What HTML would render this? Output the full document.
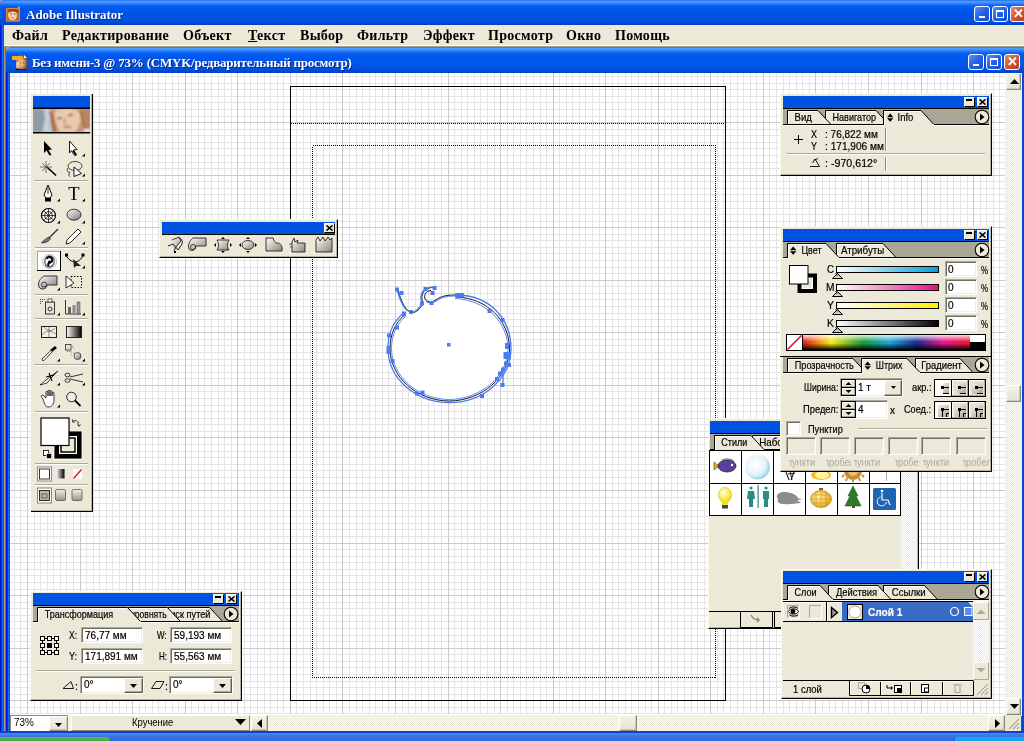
<!DOCTYPE html>
<html><head><meta charset="utf-8">
<style>
*{margin:0;padding:0;box-sizing:border-box}
html,body{width:1024px;height:741px;overflow:hidden;background:#0054E3;font-family:"Liberation Sans",sans-serif;font-size:11px;color:#000}
.a{position:absolute}
#apptitle{left:0;top:0;width:1024px;height:25px;background:linear-gradient(#1A5CE6 0px,#4A9CFF 1px,#3D8EFF 3px,#1068F5 5px,#0058EE 8px,#0054E6 16px,#0052E2 20px,#0046D0 24px,#0040C4 25px)}
#appborder{left:0;top:0;width:1024px;height:741px;background:#0046D5}
body{background:#7A96C8}
#menubar{left:4px;top:25px;width:1020px;height:21px;background:#ECE9D8}
.menu{font-family:"Liberation Serif",serif;font-weight:bold;font-size:14px;top:28px;letter-spacing:0.3px;line-height:16px;color:#000}
#mdi{left:4px;top:46px;width:1020px;height:686px;background:linear-gradient(to right,#A89C78 0 1px,#7A7460 1px 2px,#A39D86 2px)}
#docwin{left:6px;top:47px;width:1025px;height:685px;background:#0054E3;border-radius:7px 7px 0 0}
#doctitle{left:6px;top:47px;width:1025px;height:26px;border-radius:7px 7px 0 0;background:linear-gradient(#2A70F0 0px,#4A9CFF 1.5px,#3A8CFF 3px,#1068F5 5.5px,#0058EE 8px,#0055E8 17px,#0052E2 21px,#0046D0 25px,#0040C4 26px)}
.ttl{font-family:"Liberation Serif",serif;font-weight:bold;color:#fff;text-shadow:1px 1px 0 #0A1E8C}
#canvas{left:10px;top:73px;width:995px;height:642px;background:#fff;overflow:hidden}
.xpbtn{border:1px solid #fff;border-radius:3px;background:linear-gradient(135deg,#5B8FF6,#2460E6 50%,#1A4CD0)}
.xpclose{border:1px solid #fff;border-radius:3px;background:linear-gradient(135deg,#F08A6A,#D9532E 50%,#B63A18)}

.scr{background:#F3F2EA;background-image:repeating-conic-gradient(#ECE9D8 0 25%,#FBFAF5 0 50%);background-size:2px 2px}
.sbtn{position:absolute;background:linear-gradient(#F4F2E8,#E6E3D3);border-right:1px solid #8C8A7E;border-bottom:1px solid #8C8A7E;border-left:1px solid #fff;border-top:1px solid #fff;box-shadow:inset -1px -1px 0 #CFCBB8}
.pnl{position:absolute;background:#ECE9D8;border-left:1px solid #FBFAF3;border-top:1px solid #FBFAF3;box-shadow:1px 1px 0 #000, inset -1px -1px 0 #B9B6A6}
.ptl{position:absolute;left:2px;right:2px;top:2px;height:13px;background:#0052E0;border-bottom:1px solid #000}
.pbt{position:absolute;top:1px;width:11px;height:10px;background:#ECE9D8;border-left:1px solid #fff;border-top:1px solid #fff;border-right:1px solid #404040;border-bottom:1px solid #404040}
</style></head><body><div id="root" style="position:absolute;left:0;top:0;width:1024px;height:741px;will-change:transform">
<svg id="chkdefs" width="0" height="0" style="position:absolute"><defs><pattern id="chk" width="2" height="2" patternUnits="userSpaceOnUse"><rect width="2" height="2" fill="#ECE9D8"/><rect width="1" height="1" fill="#fff"/><rect x="1" y="1" width="1" height="1" fill="#fff"/></pattern></defs></svg>
<div class="a" id="appborder" style="border-radius:6px 0 0 0"></div>
<div class="a" id="apptitle" style="border-radius:6px 0 0 0"></div>
<div class="a ttl" style="left:26px;top:7px;font-size:13px;line-height:15px">Adobe Illustrator</div>
<div class="a" id="menubar"></div><div class="a" style="left:4px;top:45px;width:1020px;height:1px;background:#fff"></div>
<div class="a menu" style="left:12px">Файл</div>
<div class="a menu" style="left:62px">Редактирование</div>
<div class="a menu" style="left:183px">Объект</div>
<div class="a menu" style="left:248px"><u>Т</u>екст</div>
<div class="a menu" style="left:300px">Выбор</div>
<div class="a menu" style="left:357px">Фильтр</div>
<div class="a menu" style="left:423px">Эффект</div>
<div class="a menu" style="left:488px">Просмотр</div>
<div class="a menu" style="left:566px">Окно</div>
<div class="a menu" style="left:615px">Помощь</div>
<div class="a" id="mdi"></div>
<div class="a" id="docwin"></div>
<div class="a" id="doctitle"></div>
<div class="a ttl" style="left:32px;top:55px;font-size:13px;line-height:15px;letter-spacing:-0.22px">Без имени-3 @ 73% (CMYK/редварительный просмотр)</div>
<div class="a" style="left:0;top:25px;width:4px;height:706px;background:linear-gradient(to right,#0016D0 0 1px,#0A34D8 1px 2px,#1A6AF0 2px 3px,#0058E8 3px 4px)"></div>
<div class="a" style="left:6px;top:73px;width:4px;height:658px;background:linear-gradient(to right,#0016D8 0 1px,#0034E0 1px 2px,#1A6AF0 2px 3px,#0058E8 3px 4px)"></div>
<div class="a" id="canvas">
<svg width="995" height="641" style="position:absolute;left:0;top:0">

<rect width="995" height="641" fill="#fff"/><path d="M4.5 0V641M10.5 0V641M24.5 0V641M30.5 0V641M37.5 0V641M43.5 0V641M50.5 0V641M56.5 0V641M63.5 0V641M76.5 0V641M83.5 0V641M89.5 0V641M96.5 0V641M102.5 0V641M109.5 0V641M116.5 0V641M129.5 0V641M135.5 0V641M142.5 0V641M148.5 0V641M155.5 0V641M162.5 0V641M168.5 0V641M181.5 0V641M188.5 0V641M194.5 0V641M201.5 0V641M208.5 0V641M214.5 0V641M221.5 0V641M234.5 0V641M240.5 0V641M247.5 0V641M254.5 0V641M260.5 0V641M267.5 0V641M273.5 0V641M286.5 0V641M293.5 0V641M300.5 0V641M306.5 0V641M313.5 0V641M319.5 0V641M326.5 0V641M339.5 0V641M346.5 0V641M352.5 0V641M359.5 0V641M365.5 0V641M372.5 0V641M378.5 0V641M392.5 0V641M398.5 0V641M405.5 0V641M411.5 0V641M418.5 0V641M424.5 0V641M431.5 0V641M444.5 0V641M451.5 0V641M457.5 0V641M464.5 0V641M470.5 0V641M477.5 0V641M484.5 0V641M497.5 0V641M503.5 0V641M510.5 0V641M516.5 0V641M523.5 0V641M530.5 0V641M536.5 0V641M549.5 0V641M556.5 0V641M562.5 0V641M569.5 0V641M575.5 0V641M582.5 0V641M589.5 0V641M602.5 0V641M608.5 0V641M615.5 0V641M621.5 0V641M628.5 0V641M635.5 0V641M641.5 0V641M654.5 0V641M661.5 0V641M667.5 0V641M674.5 0V641M681.5 0V641M687.5 0V641M694.5 0V641M707.5 0V641M713.5 0V641M720.5 0V641M727.5 0V641M733.5 0V641M740.5 0V641M746.5 0V641M759.5 0V641M766.5 0V641M773.5 0V641M779.5 0V641M786.5 0V641M792.5 0V641M799.5 0V641M812.5 0V641M819.5 0V641M825.5 0V641M832.5 0V641M838.5 0V641M845.5 0V641M851.5 0V641M865.5 0V641M871.5 0V641M878.5 0V641M884.5 0V641M891.5 0V641M897.5 0V641M904.5 0V641M917.5 0V641M924.5 0V641M930.5 0V641M937.5 0V641M943.5 0V641M950.5 0V641M957.5 0V641M970.5 0V641M976.5 0V641M983.5 0V641M989.5 0V641M0 3.5H995M0 10.5H995M0 16.5H995M0 23.5H995M0 29.5H995M0 36.5H995M0 43.5H995M0 56.5H995M0 62.5H995M0 69.5H995M0 75.5H995M0 82.5H995M0 89.5H995M0 95.5H995M0 108.5H995M0 115.5H995M0 121.5H995M0 128.5H995M0 135.5H995M0 141.5H995M0 148.5H995M0 161.5H995M0 167.5H995M0 174.5H995M0 180.5H995M0 187.5H995M0 194.5H995M0 200.5H995M0 213.5H995M0 220.5H995M0 226.5H995M0 233.5H995M0 240.5H995M0 246.5H995M0 253.5H995M0 266.5H995M0 272.5H995M0 279.5H995M0 286.5H995M0 292.5H995M0 299.5H995M0 305.5H995M0 318.5H995M0 325.5H995M0 332.5H995M0 338.5H995M0 345.5H995M0 351.5H995M0 358.5H995M0 371.5H995M0 378.5H995M0 384.5H995M0 391.5H995M0 397.5H995M0 404.5H995M0 410.5H995M0 424.5H995M0 430.5H995M0 437.5H995M0 443.5H995M0 450.5H995M0 456.5H995M0 463.5H995M0 476.5H995M0 483.5H995M0 489.5H995M0 496.5H995M0 502.5H995M0 509.5H995M0 516.5H995M0 529.5H995M0 535.5H995M0 542.5H995M0 548.5H995M0 555.5H995M0 562.5H995M0 568.5H995M0 581.5H995M0 588.5H995M0 594.5H995M0 601.5H995M0 608.5H995M0 614.5H995M0 621.5H995M0 634.5H995M0 640.5H995" stroke="#E4E4E4" stroke-width="1" shape-rendering="crispEdges"/><path d="M17.5 0V641M70.5 0V641M122.5 0V641M175.5 0V641M227.5 0V641M280.5 0V641M332.5 0V641M385.5 0V641M438.5 0V641M490.5 0V641M543.5 0V641M595.5 0V641M648.5 0V641M700.5 0V641M753.5 0V641M805.5 0V641M858.5 0V641M911.5 0V641M963.5 0V641M0 49.5H995M0 102.5H995M0 154.5H995M0 207.5H995M0 259.5H995M0 312.5H995M0 364.5H995M0 417.5H995M0 470.5H995M0 522.5H995M0 575.5H995M0 627.5H995" stroke="#CBCBCB" stroke-width="1" shape-rendering="crispEdges"/>

<g transform="translate(-10,-73)">
<rect x="290.5" y="86.5" width="435" height="614" fill="none" stroke="#000" stroke-width="1" shape-rendering="crispEdges"/>
<path d="M291 123.5H725" stroke="#000" stroke-width="1" stroke-dasharray="1 1" fill="none" shape-rendering="crispEdges"/>
<rect x="312.5" y="145.5" width="403" height="532" fill="none" stroke="#000" stroke-width="1" stroke-dasharray="1 1" shape-rendering="crispEdges"/>
<path d="M458 295 C490 296 511 318.7 511 348.5 C511 378.3 483.5 402.5 449.5 402.5 C415.5 402.5 388 378.3 388 348.5 C388 333 394 321 403 313.5 C406 311.5 409 312 412 312 C417 311 420 307 422 303 C425 301 428 303 431 303 C436 302 440 297 446 295.5 C450 295 454 295 458 295Z" fill="#fff"/>
<path d="M458 295 C490 296 511 318.7 511 348.5 C511 378.3 483.5 402.5 449.5 402.5 C415.5 402.5 388 378.3 388 348.5 C388 333 394 321 403 313.5" fill="none" stroke="#4B7BF5" stroke-width="1.3"/>
<path d="M456 297 C487 298 509 320 509.5 348.5 C509.5 377 482 400.5 449.5 401 C417 401 390 377 390 348.5 C390 334 396 322 404 315.5" fill="none" stroke="#000" stroke-width="0.9"/>
<path d="M455 298.5 C485 300 507.5 321 508 348.5 C508 376 481 399 449.5 399.5 C418 399.5 391.5 376 391.5 348.5 C391.5 335 397 324 405 317" fill="none" stroke="#4B7BF5" stroke-width="0.9"/>
<path d="M397 290 C399 297 402 305 406 309.5 C408 312 411 312 413 312 C417 311 420 307 422 303 C419 296 422 289 429 287.5 C431 287 433 287 435 288" fill="none" stroke="#000" stroke-width="0.9" transform="translate(1,0.3)"/>
<path d="M397 290 C399 297 402 305 406 309.5 C408 312 411 312 413 312 C417 311 420 307 422 303 C419 296 422 289 429 287.5 C431 287 433 287 435 288" fill="none" stroke="#4B7BF5" stroke-width="1.2"/>
<path d="M425.5 300 C423.5 296 425 291 431 290.5" fill="none" stroke="#000" stroke-width="0.9"/>
<path d="M426 301 C428 303 431 303.5 434 302 C440 298 444 296 455 296" fill="none" stroke="#000" stroke-width="0.9" transform="translate(0,-1)"/>
<path d="M426 301 C428 303 431 303.5 434 302 C440 298 444 296 455 296" fill="none" stroke="#4B7BF5" stroke-width="1.2"/>
<path d="M503 372 V385" stroke="#4B7BF5" stroke-width="1.3"/>
<g fill="#4B7BF5">
<rect x="395" y="287.5" width="4" height="4"/><rect x="399.5" y="291" width="4" height="4"/>
<rect x="402" y="311.5" width="4" height="5"/><rect x="409" y="310" width="4" height="4"/>
<rect x="420" y="301.5" width="4" height="4"/><rect x="423.5" y="287" width="4" height="4"/><rect x="432.5" y="286" width="4" height="4"/><rect x="430.5" y="291" width="4" height="4"/>
<rect x="429.5" y="301" width="4" height="4"/>
<rect x="455" y="293" width="9" height="4.5"/>
<rect x="487.5" y="309" width="4" height="4"/><rect x="500.5" y="318" width="4" height="4"/>
<rect x="505" y="343" width="4" height="6"/><rect x="503.5" y="352" width="7.5" height="7"/><rect x="507" y="363" width="4" height="4"/><rect x="504" y="361.5" width="4" height="4"/>
<rect x="501" y="367.5" width="4" height="4"/><rect x="498" y="371.5" width="4" height="4"/><rect x="495" y="377" width="4" height="4"/><rect x="500.5" y="383" width="4" height="4"/>
<rect x="480" y="394" width="4" height="4"/>
<rect x="415" y="391.5" width="4" height="4"/><rect x="420.5" y="390.5" width="4" height="4"/>
<rect x="395" y="325.5" width="4" height="4"/><rect x="387" y="333.5" width="4" height="4"/><rect x="386.5" y="346" width="4" height="8"/><rect x="390.5" y="359" width="4" height="4"/>
<rect x="447" y="343" width="3.5" height="3.5"/>
</g>
</g>

</svg>
</div>

<!-- app icon -->
<svg class="a" style="left:5px;top:6px" width="17" height="17" viewBox="5 6 17 17">
<rect x="6" y="8" width="14" height="13.5" fill="#B8683A"/>
<ellipse cx="12.5" cy="15" rx="4.5" ry="5.5" fill="#F2CDA8"/>
<path d="M8 10C10 8 15 8 18 10L18 14C16 11 11 11 9 13Z" fill="#8A4A24"/>
<path d="M10.5 14h1.5M14 14h1.5" stroke="#5A3A2A" stroke-width="0.9"/>
<path d="M11.5 18h2.5" stroke="#B86A5A" stroke-width="0.9"/>
<rect x="6.5" y="8.5" width="13" height="12.5" fill="none" stroke="#D88838" stroke-width="1"/>
<path d="M17 8L20 6V9Z" fill="#F09A30"/>
</svg>
<!-- app buttons -->
<div class="a xpbtn" style="left:974px;top:6px;width:16px;height:16px"><div class="a" style="left:4px;top:9px;width:6px;height:2px;background:#fff"></div></div>
<div class="a xpbtn" style="left:992px;top:6px;width:16px;height:16px"><div class="a" style="left:3px;top:3px;width:8px;height:8px;border:1px solid #fff;border-top-width:2px"></div></div>
<div class="a xpclose" style="left:1010px;top:6px;width:16px;height:16px;color:#fff;font-weight:bold;font-size:13px;line-height:14px;text-align:center">✕</div>
<!-- doc icon -->
<svg class="a" style="left:11px;top:53px" width="18" height="18" viewBox="11 53 18 18">
<defs><radialGradient id="face2" cx="0.45" cy="0.55" r="0.6"><stop offset="0" stop-color="#F4D2A8"/><stop offset="0.5" stop-color="#D89868"/><stop offset="1" stop-color="#7A3E1E"/></radialGradient></defs>
<path d="M16 55H24.5L27 57.5V69.5H16Z" fill="url(#face2)"/>
<path d="M16 69.5H27" stroke="#1A1A40" stroke-width="1"/>
<path d="M24 55L27 58H24Z" fill="#fff"/>
<rect x="16" y="62" width="3" height="6" fill="#E8D8C8" opacity="0.7"/>
<path d="M20 63h1.5M23 63h1.5" stroke="#5A3A2A" stroke-width="0.8"/>
<rect x="12" y="56" width="10.5" height="4" fill="#F8A818"/>
</svg>
<!-- doc buttons -->
<div class="a xpbtn" style="left:968px;top:54px;width:16px;height:16px"><div class="a" style="left:4px;top:9px;width:6px;height:2px;background:#fff"></div></div>
<div class="a xpbtn" style="left:986px;top:54px;width:16px;height:16px"><div class="a" style="left:3px;top:3px;width:8px;height:8px;border:1px solid #fff;border-top-width:2px"></div></div>
<div class="a xpclose" style="left:1004px;top:54px;width:16px;height:16px;color:#fff;font-weight:bold;font-size:13px;line-height:14px;text-align:center">✕</div>
<!-- vertical scrollbar -->
<div class="a scr" style="left:1005px;top:73px;width:17px;height:643px"></div><div class="a" style="left:1022px;top:73px;width:2px;height:658px;background:#0048E0"></div>
<div class="sbtn" style="left:1006px;top:73px;width:15px;height:17px"><svg class="a" style="left:3px;top:5px" width="9" height="5"><path d="M0 5L4.5 0L9 5Z" fill="#000"/></svg></div>
<div class="sbtn" style="left:1006px;top:385px;width:15px;height:17px"></div>
<div class="sbtn" style="left:1006px;top:698px;width:15px;height:17px"><svg class="a" style="left:3px;top:5px" width="9" height="5"><path d="M0 0L4.5 5L9 0Z" fill="#000"/></svg></div>
<!-- status bar -->
<div class="a scr" style="left:10px;top:715px;width:1011px;height:16px"></div>
<div class="a" style="left:10px;top:715px;width:58px;height:16px;background:#fff;border-top:1px solid #8C8A7E;border-left:1px solid #8C8A7E"></div>
<div class="a" style="left:14px;top:716px;font-size:11px;line-height:13px;transform:scaleX(0.9);transform-origin:0 0">73%</div>
<div class="sbtn" style="left:49px;top:716px;width:19px;height:15px"><svg class="a" style="left:5px;top:6px" width="7" height="4"><path d="M0 0L3.5 4L7 0Z" fill="#000"/></svg></div>
<div class="a" style="left:71px;top:715px;width:179px;height:16px;background:#ECE9D8;border-left:1px solid #fff;border-top:1px solid #fff;border-right:1px solid #8C8A7E;border-bottom:1px solid #8C8A7E"></div>
<div class="a" style="left:132px;top:716px;font-size:11px;line-height:13px;transform:scaleX(0.86);transform-origin:0 0">Кручение</div>
<svg class="a" style="left:235px;top:719px" width="11" height="6"><path d="M0 0L5.5 6L11 0Z" fill="#000"/></svg>
<div class="sbtn" style="left:251px;top:715px;width:17px;height:16px"><svg class="a" style="left:5px;top:3px" width="5" height="9"><path d="M5 0L0 4.5L5 9Z" fill="#000"/></svg></div>
<div class="sbtn" style="left:619px;top:715px;width:18px;height:16px"></div>
<div class="sbtn" style="left:988px;top:715px;width:17px;height:16px"><svg class="a" style="left:6px;top:3px" width="5" height="9"><path d="M0 0L5 4.5L0 9Z" fill="#000"/></svg></div>
<div class="a" style="left:1005px;top:715px;width:16px;height:16px;background:#ECE9D8"><svg class="a" style="left:2px;top:2px" width="13" height="13"><path d="M12 2L2 12M12 6L6 12M12 10L10 12" stroke="#A9A595" stroke-width="1.2"/></svg></div>
<!-- taskbar -->
<div class="a" style="left:0;top:731px;width:1024px;height:2px;background:#0B3FD6"></div>
<div class="a" style="left:0;top:733px;width:1024px;height:8px;background:linear-gradient(#4A8CF0 0px,#3C7DE8 2px,#3573E2 4px,#2F6BDA 8px)"></div>
<div class="a" style="left:0;top:737px;width:110px;height:4px;background:linear-gradient(#5DB85D,#48A648);border-radius:0 7px 0 0"></div>
<div class="a" style="left:954px;top:737px;width:70px;height:4px;background:#18A6F2;border-left:1px solid #0A6AC8"></div>
<!-- TOOLBOX -->
<div class="pnl" style="left:30px;top:93px;width:62px;height:418px"></div>
<svg class="a" style="left:30px;top:93px" width="64" height="420" viewBox="30 93 64 420">
<defs>
<linearGradient id="gsh" x1="0" x2="1" y1="0" y2="1"><stop offset="0" stop-color="#fff"/><stop offset="1" stop-color="#777"/></linearGradient>
<linearGradient id="grad" x1="0" x2="1"><stop offset="0" stop-color="#fff"/><stop offset="1" stop-color="#000"/></linearGradient>
<linearGradient id="smode" x1="0" x2="0" y1="0" y2="1"><stop offset="0" stop-color="#F4F2E8"/><stop offset="1" stop-color="#9A9686"/></linearGradient>
<filter id="vblur" x="-10%" y="-10%" width="120%" height="120%"><feGaussianBlur stdDeviation="0.8"/></filter>
<filter id="sblur" x="-20%" y="-20%" width="140%" height="140%"><feGaussianBlur stdDeviation="0.6"/></filter>
<clipPath id="vclip"><rect x="33" y="109" width="57" height="23"/></clipPath>
</defs>
<rect x="33" y="96" width="57" height="12" fill="#0052E0"/>
<rect x="33" y="107.5" width="57" height="1.5" fill="#000"/>
<g clip-path="url(#vclip)">
<rect x="33" y="109" width="57" height="23" fill="#A9B6BE"/>
<g filter="url(#vblur)">
<rect x="33" y="109" width="12" height="23" fill="#8E9CA6"/>
<path d="M43 109C46 115 45 122 43 128C42 131 44 132 46 132H52C48 126 50 117 52 109Z" fill="#C5D0D6"/>
<path d="M50 109H90V132H52C52 126 50 120 51 114Z" fill="#C99478"/>
<path d="M55 111C62 108 74 108 79 112C82 118 80 128 74 132H60C56 126 54 118 55 111Z" fill="#E9CAAA"/>
<path d="M50 112C53 116 51 121 54 125C55 128 53 130 55 132" stroke="#A05838" stroke-width="2.5" fill="none"/>
<path d="M78 109C84 114 86 122 83 132H90V109Z" fill="#BC8462"/>
<path d="M80 112C84 118 82 125 86 130" stroke="#9A5E40" stroke-width="1.5" fill="none"/>
<path d="M57 118.5L62 118M68 115.5L73 114.5" stroke="#5E4A38" stroke-width="1.4"/>
<path d="M65 118L64 123L67 124" stroke="#A87858" stroke-width="1.1" fill="none"/>
<path d="M64 127.5C66 127 69 126.5 71 127" stroke="#A8524A" stroke-width="1.4" fill="none"/>
<rect x="84" y="129" width="6" height="3" fill="#E8ECEC"/>
</g></g>
<rect x="33" y="132" width="57" height="1.5" fill="#000"/>
<g stroke-width="1">
<path d="M35 180.5H88M35 247.5H88M35 294.5H88M35 318.5H88M35 364.5H88M35 411.5H88M35 463.5H88M35 484.5H88" stroke="#ACA899"/>
<path d="M35 181.5H88M35 248.5H88M35 295.5H88M35 319.5H88M35 365.5H88M35 412.5H88M35 464.5H88M35 485.5H88" stroke="#fff"/>
</g>
<g fill="#000">
<path d="M82 156.5h3v-3z"/><path d="M82 176.5h3v-3z"/><path d="M57 201.5h3v-3z"/><path d="M82 201.5h3v-3z"/>
<path d="M57 223.5h3v-3z"/><path d="M82 223.5h3v-3z"/><path d="M82 244.5h3v-3z"/>
<path d="M82 268.5h3v-3z"/><path d="M57 290.5h3v-3z"/><path d="M57 315.5h3v-3z"/><path d="M82 315.5h3v-3z"/>
<path d="M57 361.5h3v-3z"/><path d="M82 361.5h3v-3z"/><path d="M57 385.5h3v-3z"/><path d="M82 385.5h3v-3z"/><path d="M57 407.5h3v-3z"/>
</g>
<path d="M44 141L52 149.5L48.5 150L51.5 155L49.5 155.5L46.5 150.5L44 153Z" fill="#000"/>
<path d="M69.5 141L77 149.5L73.5 150L76.5 155L74.5 155.5L71.5 150.5L69.5 153Z" fill="#fff" stroke="#000" stroke-width="0.9"/>
<path d="M73 150.5L76 155" stroke="#000" stroke-width="1.6"/>
<path d="M47 167L56 175.5" stroke="#000" stroke-width="1.6"/>
<path d="M46 161v12M40 167h12M42 163l8 8M50 163l-8 8" stroke="#555" stroke-width="0.8"/>
<ellipse cx="75" cy="166" rx="7" ry="4.5" fill="none" stroke="#333" stroke-width="0.9"/>
<path d="M68 168C66 171 68 173 70 172C68 175 69 177 70 176" stroke="#333" stroke-width="0.9" fill="none"/>
<path d="M74 167L81.5 173.5L74 176.5Z" fill="#fff" stroke="#000" stroke-width="0.9"/>
<path d="M48 185L52 195L50 198H46L44 195Z" fill="#fff" stroke="#000" stroke-width="1"/>
<path d="M48 188V194" stroke="#000" stroke-width="0.8"/><rect x="45" y="198" width="6" height="3.5" fill="#000"/>
<text x="74" y="200.3" font-family="Liberation Serif" font-size="18.5" text-anchor="middle" fill="#000">T</text>
<circle cx="48.5" cy="215.5" r="7" fill="#fff" stroke="#000" stroke-width="1.2"/>
<circle cx="48.5" cy="215.5" r="4" fill="none" stroke="#000" stroke-width="0.8"/>
<path d="M41.5 215.5h14M48.5 208.5v14M43.5 210.5l10 10M53.5 210.5l-10 10" stroke="#000" stroke-width="0.7"/>
<ellipse cx="74" cy="214.7" rx="7" ry="5.5" fill="url(#gsh)" stroke="#222" stroke-width="0.9"/>
<path d="M58 229L48 239" stroke="#333" stroke-width="1.2"/>
<path d="M49 237C45 239 43 241 41.5 243C45 243 48 242 50.5 239Z" fill="#777" stroke="#222" stroke-width="0.7"/>
<path d="M78 229L81 232L70 243L66 244L67 240Z" fill="#fff" stroke="#222" stroke-width="1"/>
<rect x="37" y="251" width="24" height="20" fill="#000"/>
<rect x="37" y="251" width="23" height="19" fill="#ACA899"/>
<rect x="38" y="252" width="22" height="18" fill="#fff"/>
<g filter="url(#sblur)">
<circle cx="49.5" cy="261.5" r="7" fill="none" stroke="#B0B0B0" stroke-width="0.9"/>
<path d="M46 258C48 255 53 255.5 54 259.5C55 263 53 266.5 49.5 267" stroke="#666" stroke-width="1.3" fill="none"/>
<path d="M53 265C51 268 46 267.5 45 263.5C44 260 46 256.5 49.5 256" stroke="#666" stroke-width="1.3" fill="none" transform="rotate(180 49.5 261.5) rotate(180 49.5 261.5)"/>
<path d="M47 259C47 257 50 256 51.5 258C53 260 52 262 50 262.5C48 263 47.5 265 49 266" stroke="#111" stroke-width="2.2" fill="none"/>
</g>
<circle cx="49.5" cy="262" r="1.6" fill="#000"/>
<path d="M66 255C70 264 80 264 83 255" stroke="#000" stroke-width="1" fill="none"/>
<rect x="65" y="253.5" width="3" height="3" fill="#000"/><rect x="81.5" y="253.5" width="3" height="3" fill="#000"/>
<path d="M73 259L81 266L76 266L74 268Z" fill="#222"/>
<path d="M44 276H57V285H47C47 290 38 291 38.5 284C39 279 43 277 44 276Z" fill="url(#gsh)" stroke="#222" stroke-width="0.9"/>
<circle cx="44" cy="284.5" r="2.5" fill="none" stroke="#222" stroke-width="0.8"/>
<rect x="71" y="276.5" width="10.5" height="11" fill="none" stroke="#000" stroke-width="1" stroke-dasharray="1.5 1.5"/>
<path d="M66 276L74 283L66 288Z" fill="#fff" stroke="#000" stroke-width="0.8"/>
<rect x="45.5" y="302" width="9" height="12" fill="#E8E6DA" stroke="#222" stroke-width="0.9"/>
<circle cx="50" cy="309" r="2" fill="none" stroke="#222" stroke-width="0.9"/>
<rect x="48" y="299" width="4" height="3" fill="#fff" stroke="#222" stroke-width="0.7"/>
<path d="M40 299.5h1M42 299.5h1M44 299.5h1M40 301.5h1M42 301.5h1M40 303.5h1" stroke="#333" stroke-width="0.9"/>
<path d="M65.5 300V314H81" stroke="#222" stroke-width="0.9" fill="none"/>
<rect x="68" y="307" width="3" height="7" fill="#666"/><rect x="72.5" y="305" width="3" height="9" fill="#888"/><rect x="77" y="302" width="3" height="12" fill="#999" stroke="#444" stroke-width="0.5"/>
<rect x="41.5" y="326.5" width="15" height="11" fill="#F3F1E6" stroke="#222" stroke-width="1"/>
<path d="M42 335C46 330 50 330 56 334M49 327V337M44 327C47 331 52 332 55 328" stroke="#444" stroke-width="0.6" fill="none"/>
<rect x="66.5" y="326.5" width="15" height="11" fill="url(#grad)" stroke="#222" stroke-width="1"/>
<path d="M55 346L57 348L52 352L50 350Z" fill="#000"/>
<path d="M51 350.5L42 359L42.5 360.5L44 360.5L52.5 351.5Z" fill="#fff" stroke="#222" stroke-width="0.9"/>
<rect x="65.5" y="344.5" width="5.5" height="5.5" fill="#E0DED2" stroke="#333" stroke-width="0.8"/>
<circle cx="77.5" cy="356" r="3.5" fill="url(#gsh)" stroke="#333" stroke-width="0.8"/>
<path d="M72 346.5h.8M73.5 348h.8M67 351.5h.8M69 351.5h.8M71 352h.8M73 353h.8M70.5 355h.8" stroke="#555" stroke-width="0.9"/>
<path d="M58 371L46 380L40 385L47 383L52 377Z" fill="#fff" stroke="#222" stroke-width="0.9"/>
<path d="M49 373L52 381M46 377L54 375" stroke="#000" stroke-width="1.1"/>
<path d="M70 377L83 374M70 379L83 382" stroke="#333" stroke-width="1"/>
<ellipse cx="67.5" cy="375" rx="2.5" ry="1.8" fill="none" stroke="#333" stroke-width="1"/>
<ellipse cx="67.5" cy="380.5" rx="2.5" ry="1.8" fill="none" stroke="#333" stroke-width="1"/>
<path d="M43 399C41 397 41 396 42 395C43 395 45 397 46 398V392C46 391 48 391 48 392V396V391C48 390 50 390 50 391V396V391.5C50 390.5 52 390.5 52 391.5V396V393C52 392 54 392 54 393V400C54 404 52 407 48 407C45 407 44 402 43 399Z" fill="#fff" stroke="#222" stroke-width="0.9"/>
<circle cx="71.5" cy="397" r="4.8" fill="#EEE" stroke="#222" stroke-width="1"/>
<path d="M75 400.5L80.5 406" stroke="#000" stroke-width="1.8"/>
<path d="M79 423C77 420 74 420 72.5 421.5M72.5 419.5v2.5h2.5M79 426C79 424 78 423 77 423M80.5 424.5l-1.5 2l-1.5-2" stroke="#222" stroke-width="0.8" fill="none"/>
<rect x="54" y="431" width="28" height="28" fill="#000" stroke="#fff" stroke-width="0.8"/>
<rect x="59" y="436" width="18" height="18" fill="#fff"/>
<rect x="61" y="438" width="14" height="14" fill="#ECE9D8" stroke="#000" stroke-width="1.5"/>
<rect x="41" y="418" width="28" height="27.5" fill="#fff" stroke="#000" stroke-width="1.2"/>
<rect x="43.5" y="450.5" width="5" height="5" fill="#fff" stroke="#000" stroke-width="0.8"/>
<rect x="46.5" y="453.5" width="5" height="5" fill="#000" stroke="#fff" stroke-width="0.6"/>
<rect x="37.5" y="467" width="14" height="14" fill="#fff" stroke="#8C8A7E" stroke-width="1"/>
<rect x="39.5" y="469" width="10" height="10" fill="#fff" stroke="#000" stroke-width="0.8"/>
<rect x="56" y="469" width="8.5" height="9.5" fill="url(#grad)"/>
<rect x="73" y="469" width="9" height="10" fill="#fff"/><path d="M73.5 478.5L81.5 469.5" stroke="#E0102A" stroke-width="1.4"/>
<rect x="37.5" y="488" width="14" height="15" fill="#fff" stroke="#8C8A7E" stroke-width="1"/>
<rect x="39.5" y="490.5" width="10" height="10" fill="#B8B5A5" stroke="#000" stroke-width="0.8"/>
<rect x="42" y="494" width="5" height="4" fill="none" stroke="#333" stroke-width="0.6"/>
<rect x="55.5" y="489.5" width="10" height="11" rx="1.5" fill="url(#smode)" stroke="#555" stroke-width="0.8"/>
<rect x="72" y="489.5" width="10" height="11" rx="1.5" fill="url(#smode)" stroke="#555" stroke-width="0.8"/>
</svg>
<div class="a" style="left:159px;top:219px;width:179px;height:39px;background:#ECE9D8;border-left:1px solid #FBF9F0;border-top:1px solid #FBF9F0;border-right:1px solid #000;border-bottom:1px solid #000;box-shadow:inset -1px -1px 0 #B5B2A2"></div><div class="a" style="left:162px;top:222px;width:173px;height:12px;background:#0052E0"></div><div class="a" style="left:162px;top:234px;width:173px;height:1px;background:#000"></div>
<div class="a" style="left:324px;top:223px;width:11px;height:10px;background:#ECE9D8;border-left:1px solid #fff;border-top:1px solid #fff;border-right:1px solid #000;border-bottom:1px solid #000"></div><svg class="a" style="left:326px;top:225px" width="7" height="6"><path d="M0.5 0.5L6.5 5.5M6.5 0.5L0.5 5.5" stroke="#000" stroke-width="1.6"/></svg>
<svg class="a" style="left:160px;top:235px" width="176" height="22" viewBox="160 235 176 22">
<defs><linearGradient id="tg" x1="0" x2="1" y1="0" y2="1"><stop offset="0" stop-color="#fff"/><stop offset="1" stop-color="#8A8676"/></linearGradient></defs>
<path d="M172 240L179 237L181 241L176 247L174 251" fill="url(#tg)" stroke="#222" stroke-width="0.9"/>
<path d="M168 246L173 244L178 250L182 244C183 241 181 238 179 238" fill="none" stroke="#222" stroke-width="1"/>
<rect x="174" y="251" width="2" height="2" fill="#000"/>
<path d="M193 238H206V246H196C196 251 188 253 188.5 246C189 241 192 239 193 238Z" fill="url(#tg)" stroke="#222" stroke-width="0.9"/>
<circle cx="193" cy="247" r="2.6" fill="none" stroke="#222" stroke-width="0.8"/>
<path d="M217 240H229C227 243 227 248 229 250H217C219 248 219 243 217 240Z" fill="url(#tg)" stroke="#222" stroke-width="0.9"/>
<path d="M214 245L216 243V247ZM232 245L230 243V247ZM223 237L221 239H225ZM223 253L221 251H225Z" fill="#000"/>
<ellipse cx="248" cy="245" rx="6" ry="4.5" fill="url(#tg)" stroke="#222" stroke-width="0.9"/>
<path d="M239 245L241 243V247ZM257 245L255 243V247ZM248 237L246 239H250ZM248 253L246 251H250Z" fill="#000"/>
<path d="M266 238H273C274 241 275 243 277 243C281 243 283 247 282 251H266Z" fill="url(#tg)" stroke="#222" stroke-width="0.9"/>
<path d="M292 242L294 238L295 242L298 240L297 243H305V252H292Z" fill="url(#tg)" stroke="#222" stroke-width="0.9"/>
<path d="M289 244H292M290 247H292" stroke="#222" stroke-width="0.7"/>
<path d="M316 240L318 237L320 241L323 237L325 241L328 237L330 240L332 238V252H316Z" fill="url(#tg)" stroke="#222" stroke-width="0.9"/>
</svg>
<div class="a" style="left:30px;top:591px;width:212px;height:110px;background:#ECE9D8;border-left:1px solid #FBF9F0;border-top:1px solid #FBF9F0;border-right:1px solid #000;border-bottom:1px solid #000;box-shadow:inset -1px -1px 0 #B5B2A2"></div><div class="a" style="left:33px;top:593px;width:206px;height:12px;background:#0052E0"></div><div class="a" style="left:33px;top:605px;width:206px;height:1px;background:#000"></div>
<div class="a" style="left:213px;top:594px;width:11px;height:10px;background:#ECE9D8;border-left:1px solid #fff;border-top:1px solid #fff;border-right:1px solid #000;border-bottom:1px solid #000"></div><div class="a" style="left:215px;top:596px;width:6px;height:2px;background:#000"></div>
<div class="a" style="left:226px;top:594px;width:11px;height:10px;background:#ECE9D8;border-left:1px solid #fff;border-top:1px solid #fff;border-right:1px solid #000;border-bottom:1px solid #000"></div><svg class="a" style="left:228px;top:596px" width="7" height="6"><path d="M0.5 0.5L6.5 5.5M6.5 0.5L0.5 5.5" stroke="#000" stroke-width="1.6"/></svg>
<svg class="a" style="left:33px;top:606px" width="206" height="17" viewBox="33 606 206 17"><rect x="33" y="606" width="206" height="15" fill="#ABA795"/><path d="M33 621.5H239" stroke="#000" stroke-width="1"/><path d="M33 622.5H239" stroke="#FDFCF6" stroke-width="1"/><path d="M168.5 621.5V607.5H209.6L222.6 621.5Z" fill="#ECE9D8" stroke="#000" stroke-width="1"/><path d="M169.5 621V608.5H209.1" fill="none" stroke="#fff" stroke-width="1"/><text x="158.5" y="618" font-family="Liberation Sans" font-size="11" fill="#000" stroke="#000" stroke-width="0.2" textLength="52" lengthAdjust="spacingAndGlyphs">Поиск путей</text><path d="M128.5 621.5V607.5H167.4L180.4 621.5Z" fill="#ECE9D8" stroke="#000" stroke-width="1"/><path d="M129.5 621V608.5H166.9" fill="none" stroke="#fff" stroke-width="1"/><text x="123" y="618" font-family="Liberation Sans" font-size="11" fill="#000" stroke="#000" stroke-width="0.2" textLength="43.6" lengthAdjust="spacingAndGlyphs">Выровнять</text><path d="M37.5 622V607.5H127.5L140.5 621.5V622Z" fill="#ECE9D8"/><path d="M37.5 622V607.5H127.5L140.5 621.5H239" fill="none" stroke="#000" stroke-width="1"/><path d="M38.5 622V608.5H127.0" fill="none" stroke="#fff" stroke-width="1"/><rect x="38" y="621" width="102.5" height="2" fill="#ECE9D8"/><path d="M38.5 623V608.5" stroke="#fff" stroke-width="1"/><text x="44.7" y="618" font-family="Liberation Sans" font-size="11" fill="#000" stroke="#000" stroke-width="0.2" textLength="68.5" lengthAdjust="spacingAndGlyphs">Трансформация</text></svg>
<svg class="a" style="left:223px;top:606px" width="16" height="16"><circle cx="8" cy="8" r="6.8" fill="#ECE9D8" stroke="#000" stroke-width="1.1"/><path d="M6 4.5L10.5 8L6 11.5Z" fill="#000"/></svg>
<svg class="a" style="left:33px;top:622px" width="208" height="78" viewBox="33 622 208 78">
<g fill="#fff" stroke="#000" stroke-width="1">
<rect x="40.5" y="636.5" width="4" height="4"/><rect x="47.5" y="636.5" width="4" height="4"/><rect x="54.5" y="636.5" width="4" height="4"/>
<rect x="40.5" y="643.5" width="4" height="4"/><rect x="54.5" y="643.5" width="4" height="4"/>
<rect x="40.5" y="650.5" width="4" height="4"/><rect x="47.5" y="650.5" width="4" height="4"/><rect x="54.5" y="650.5" width="4" height="4"/>
</g>
<rect x="47" y="643" width="5" height="5" fill="#000"/>
<path d="M44.5 638.5H47.5M51.5 638.5H54.5M44.5 652.5H47.5M51.5 652.5H54.5M42.5 640.5V643.5M42.5 647.5V650.5M56.5 640.5V643.5M56.5 647.5V650.5" stroke="#000" stroke-width="1"/>
<path d="M36 670.5H235" stroke="#ACA899" stroke-width="1"/><path d="M36 671.5H235" stroke="#fff" stroke-width="1"/>
<path d="M63 688.5H73.5L71 681.5Z" fill="none" stroke="#000" stroke-width="0.9"/>
<path d="M151.5 688.5H160L164 681.5H156Z" fill="none" stroke="#000" stroke-width="0.9"/>
</svg>
<svg class="a" style="left:69.4px;top:621px;overflow:visible" width="10" height="14"><text x="0" y="18" font-family="Liberation Sans" font-size="11"  fill="#000" stroke="#000" stroke-width="0.2" textLength="8" lengthAdjust="spacingAndGlyphs">X:</text></svg>
<svg class="a" style="left:69.4px;top:642px;overflow:visible" width="10" height="14"><text x="0" y="18" font-family="Liberation Sans" font-size="11"  fill="#000" stroke="#000" stroke-width="0.2" textLength="8" lengthAdjust="spacingAndGlyphs">Y:</text></svg>
<svg class="a" style="left:157px;top:621px;overflow:visible" width="11.6" height="14"><text x="0" y="18" font-family="Liberation Sans" font-size="11"  fill="#000" stroke="#000" stroke-width="0.2" textLength="9.6" lengthAdjust="spacingAndGlyphs">W:</text></svg>
<svg class="a" style="left:158.5px;top:642px;overflow:visible" width="10" height="14"><text x="0" y="18" font-family="Liberation Sans" font-size="11"  fill="#000" stroke="#000" stroke-width="0.2" textLength="8" lengthAdjust="spacingAndGlyphs">H:</text></svg>
<div class="a" style="left:81px;top:627px;width:62px;height:16px;background:#fff;border-top:1px solid #ACA899;border-left:1px solid #ACA899;border-right:1px solid #fff;border-bottom:1px solid #fff;box-shadow:inset 1px 1px 0 #716F64, inset -1px -1px 0 #F1EFE2"></div><div class="a" style="left:85px;top:629px;line-height:13px;font-size:11px;white-space:nowrap;transform:scaleX(0.91);transform-origin:0 0;-webkit-text-stroke:0.2px #000">76,77 мм</div>
<div class="a" style="left:81px;top:648px;width:62px;height:16px;background:#fff;border-top:1px solid #ACA899;border-left:1px solid #ACA899;border-right:1px solid #fff;border-bottom:1px solid #fff;box-shadow:inset 1px 1px 0 #716F64, inset -1px -1px 0 #F1EFE2"></div><div class="a" style="left:85px;top:650px;line-height:13px;font-size:11px;white-space:nowrap;transform:scaleX(0.91);transform-origin:0 0;-webkit-text-stroke:0.2px #000">171,891 мм</div>
<div class="a" style="left:170px;top:627px;width:62px;height:16px;background:#fff;border-top:1px solid #ACA899;border-left:1px solid #ACA899;border-right:1px solid #fff;border-bottom:1px solid #fff;box-shadow:inset 1px 1px 0 #716F64, inset -1px -1px 0 #F1EFE2"></div><div class="a" style="left:174px;top:629px;line-height:13px;font-size:11px;white-space:nowrap;transform:scaleX(0.91);transform-origin:0 0;-webkit-text-stroke:0.2px #000">59,193 мм</div>
<div class="a" style="left:170px;top:648px;width:62px;height:16px;background:#fff;border-top:1px solid #ACA899;border-left:1px solid #ACA899;border-right:1px solid #fff;border-bottom:1px solid #fff;box-shadow:inset 1px 1px 0 #716F64, inset -1px -1px 0 #F1EFE2"></div><div class="a" style="left:174px;top:650px;line-height:13px;font-size:11px;white-space:nowrap;transform:scaleX(0.91);transform-origin:0 0;-webkit-text-stroke:0.2px #000">55,563 мм</div>
<svg class="a" style="left:75px;top:672px;overflow:visible" width="5" height="14"><text x="0" y="18" font-family="Liberation Sans" font-size="11"  fill="#000" stroke="#000" stroke-width="0.2" textLength="3" lengthAdjust="spacingAndGlyphs">:</text></svg>
<svg class="a" style="left:164.5px;top:672px;overflow:visible" width="5" height="14"><text x="0" y="18" font-family="Liberation Sans" font-size="11"  fill="#000" stroke="#000" stroke-width="0.2" textLength="3" lengthAdjust="spacingAndGlyphs">:</text></svg>
<div class="a" style="left:80px;top:676px;width:64px;height:18px;background:#fff;border-top:1px solid #ACA899;border-left:1px solid #ACA899;border-right:1px solid #fff;border-bottom:1px solid #fff;box-shadow:inset 1px 1px 0 #716F64, inset -1px -1px 0 #F1EFE2"></div><div class="a" style="left:84px;top:678px;line-height:13px;font-size:11px;white-space:nowrap;transform:scaleX(0.91);transform-origin:0 0;-webkit-text-stroke:0.2px #000">0°</div>
<div class="a" style="left:124px;top:678px;width:19px;height:15px;background:#ECE9D8;border-left:1px solid #fff;border-top:1px solid #fff;border-right:1px solid #5D5B52;border-bottom:1px solid #5D5B52;box-shadow:inset -1px -1px 0 #ACA899"></div>
<svg class="a" style="left:130px;top:684px" width="7" height="4"><path d="M0 0L3.5 4L7 0Z" fill="#000"/></svg>
<div class="a" style="left:169px;top:676px;width:64px;height:18px;background:#fff;border-top:1px solid #ACA899;border-left:1px solid #ACA899;border-right:1px solid #fff;border-bottom:1px solid #fff;box-shadow:inset 1px 1px 0 #716F64, inset -1px -1px 0 #F1EFE2"></div><div class="a" style="left:173px;top:678px;line-height:13px;font-size:11px;white-space:nowrap;transform:scaleX(0.91);transform-origin:0 0;-webkit-text-stroke:0.2px #000">0°</div>
<div class="a" style="left:213px;top:678px;width:19px;height:15px;background:#ECE9D8;border-left:1px solid #fff;border-top:1px solid #fff;border-right:1px solid #5D5B52;border-bottom:1px solid #5D5B52;box-shadow:inset -1px -1px 0 #ACA899"></div>
<svg class="a" style="left:219px;top:684px" width="7" height="4"><path d="M0 0L3.5 4L7 0Z" fill="#000"/></svg>
<div class="a" style="left:708px;top:418px;width:211px;height:211px;background:#ECE9D8;border-left:1px solid #FBF9F0;border-top:1px solid #FBF9F0;border-right:1px solid #000;border-bottom:1px solid #000;box-shadow:inset -1px -1px 0 #B5B2A2"></div><div class="a" style="left:710px;top:421px;width:206px;height:12px;background:#0052E0"></div><div class="a" style="left:710px;top:433px;width:206px;height:1px;background:#000"></div>
<svg class="a" style="left:710px;top:434px" width="207" height="17" viewBox="710 434 207 17"><rect x="710" y="434" width="207" height="15" fill="#ABA795"/><path d="M710 449.5H917" stroke="#000" stroke-width="1"/><path d="M710 450.5H917" stroke="#FDFCF6" stroke-width="1"/><path d="M752.5 449.5V435.5H800L813 449.5Z" fill="#ECE9D8" stroke="#000" stroke-width="1"/><path d="M753.5 449V436.5H799.5" fill="none" stroke="#fff" stroke-width="1"/><text x="759.2" y="446" font-family="Liberation Sans" font-size="11" fill="#000" stroke="#000" stroke-width="0.2" textLength="36" lengthAdjust="spacingAndGlyphs">Наборы</text><path d="M714.5 450V435.5H751L764 449.5V450Z" fill="#ECE9D8"/><path d="M714.5 450V435.5H751L764 449.5H917" fill="none" stroke="#000" stroke-width="1"/><path d="M715.5 450V436.5H750.5" fill="none" stroke="#fff" stroke-width="1"/><rect x="715" y="449" width="49" height="2" fill="#ECE9D8"/><path d="M715.5 451V436.5" stroke="#fff" stroke-width="1"/><text x="721.3" y="446" font-family="Liberation Sans" font-size="11" fill="#000" stroke="#000" stroke-width="0.2" textLength="26" lengthAdjust="spacingAndGlyphs">Стили</text></svg>
<svg class="a" style="left:709px;top:450px" width="209" height="178" viewBox="709 450 209 178">
<defs>
<radialGradient id="sph" cx="0.4" cy="0.4" r="0.6"><stop offset="0" stop-color="#fff"/><stop offset="0.7" stop-color="#E4F4FA"/><stop offset="1" stop-color="#9CD4E8"/></radialGradient>
<radialGradient id="bulb" cx="0.4" cy="0.35" r="0.6"><stop offset="0" stop-color="#FFFFE0"/><stop offset="1" stop-color="#F2E21A"/></radialGradient>
<radialGradient id="lant" cx="0.4" cy="0.4" r="0.6"><stop offset="0" stop-color="#FFF2A0"/><stop offset="1" stop-color="#E0A820"/></radialGradient>
</defs>
<rect x="709.5" y="450.5" width="191" height="65" fill="#fff" stroke="#000" stroke-width="1"/>
<path d="M741.5 451V515M773.5 451V515M805.5 451V515M837.5 451V515M869.5 451V515M709 483.5H901" stroke="#000" stroke-width="1"/>
<rect x="901" y="450" width="16" height="161" fill="#F3F2EA"/>
<rect x="901" y="450" width="16" height="161" fill="url(#chk)"/>
<!-- fish -->
<path d="M714 462L719 466L714 470Z" fill="#F2A21A" stroke="#333" stroke-width="0.5"/>
<ellipse cx="727" cy="466" rx="9" ry="6" fill="#5A3E9E" stroke="#222" stroke-width="0.8"/>
<path d="M722 460C726 458 731 459 734 461" stroke="#222" stroke-width="0.7" fill="none"/>
<circle cx="732" cy="465" r="1.2" fill="#fff"/>
<!-- sphere -->
<circle cx="757.5" cy="467" r="12.5" fill="url(#sph)"/>
<!-- row1 col3-6 partly hidden -->
<path d="M786 472L789 480M790 471L792 480M794 472L791 480M788 474L795 473" stroke="#222" stroke-width="1.1" fill="none"/>
<ellipse cx="821" cy="475" rx="10" ry="5" fill="#F8B828"/>
<ellipse cx="822" cy="475" rx="7" ry="4" fill="#FFF4A0"/>
<circle cx="853" cy="471" r="9" fill="#C88A38"/>
<path d="M844 475l-2 2M847 478l-1 3M853 480v2M859 478l1 3M862 475l2 2" stroke="#C88A38" stroke-width="2"/>
<circle cx="853" cy="471" r="5" fill="#E8C070"/>
<path d="M886.5 472V481" stroke="#999" stroke-width="0.8"/>
<!-- bulb -->
<ellipse cx="725" cy="495" rx="6.5" ry="7.5" fill="url(#bulb)" stroke="#C8B800" stroke-width="0.6"/>
<path d="M721.5 501L722.5 506H727.5L728.5 501Z" fill="#F2E21A"/>
<rect x="722" y="505" width="6" height="3.5" fill="#444"/>
<!-- restroom -->
<g fill="#2A8C84">
<circle cx="751" cy="488" r="1.6"/><path d="M748 491H754L755 499H753V507H749V499H747Z"/>
<circle cx="766" cy="488" r="1.6"/><path d="M763 491H769V499H768V507H764V499H763Z"/>
<rect x="757.5" y="485" width="1.2" height="23"/>
</g>
<!-- blob -->
<path d="M778 494C781 491 787 492 791 493C795 494 797 496 798 498L802 500L797 500L801 503C795 503 790 505 784 504C779 504 777 502 778 499C776 497 777 495 778 494Z" fill="#8C8C8C"/>
<!-- lantern -->
<ellipse cx="821" cy="499" rx="10.5" ry="8.5" fill="url(#lant)" stroke="#B88018" stroke-width="0.7"/>
<path d="M812 495H830M811 499H831M812 503H830M816 491V507M821 490V508M826 491V507" stroke="#C8901C" stroke-width="0.5"/>
<rect x="819" y="488" width="4" height="2" fill="#806020"/>
<!-- tree -->
<path d="M853 486L858 496L856 496L861 506H845L850 496L848 496Z" fill="#2A7A2A" stroke="#1A5A1A" stroke-width="0.6"/>
<rect x="852" y="505" width="3" height="3" fill="#6A4A2A"/>
<!-- wheelchair -->
<rect x="873" y="488" width="23" height="22" rx="1.5" fill="#1E64B4"/>
<circle cx="882" cy="491" r="1.3" fill="#fff"/>
<path d="M882 493V500H888L890 505" stroke="#fff" stroke-width="1.2" fill="none"/>
<path d="M880.5 497C877 498 876 503 879 505C882 507 886 505 886.5 502" stroke="#fff" stroke-width="1" fill="none"/>
<!-- bottom bar -->
<path d="M709 611.5H917" stroke="#000" stroke-width="1"/>
<path d="M740.5 611V627.5H772.5V611M774.5 611V627.5H800" stroke="#000" stroke-width="1" fill="none"/>
<path d="M751 615C753 619 755 620 759 620" stroke="#8A8676" stroke-width="1.4" fill="none"/><path d="M757 617L760 620L757 623Z" fill="#8A8676"/>
</svg>
<div class="a" style="left:780px;top:93px;width:212px;height:83px;background:#ECE9D8;border-left:1px solid #FBF9F0;border-top:1px solid #FBF9F0;border-right:1px solid #000;border-bottom:1px solid #000;box-shadow:inset -1px -1px 0 #B5B2A2"></div><div class="a" style="left:783px;top:96px;width:206px;height:12px;background:#0052E0"></div><div class="a" style="left:783px;top:108px;width:206px;height:1px;background:#000"></div>
<div class="a" style="left:964px;top:97px;width:11px;height:10px;background:#ECE9D8;border-left:1px solid #fff;border-top:1px solid #fff;border-right:1px solid #000;border-bottom:1px solid #000"></div><div class="a" style="left:966px;top:99px;width:6px;height:2px;background:#000"></div>
<div class="a" style="left:977px;top:97px;width:11px;height:10px;background:#ECE9D8;border-left:1px solid #fff;border-top:1px solid #fff;border-right:1px solid #000;border-bottom:1px solid #000"></div><svg class="a" style="left:979px;top:99px" width="7" height="6"><path d="M0.5 0.5L6.5 5.5M6.5 0.5L0.5 5.5" stroke="#000" stroke-width="1.6"/></svg>
<svg class="a" style="left:783px;top:109px" width="206" height="17" viewBox="783 109 206 17"><rect x="783" y="109" width="206" height="15" fill="#ABA795"/><path d="M783 124.5H989" stroke="#000" stroke-width="1"/><path d="M783 125.5H989" stroke="#FDFCF6" stroke-width="1"/><path d="M825.5 124.5V110.5H876L889 124.5Z" fill="#ECE9D8" stroke="#000" stroke-width="1"/><path d="M826.5 124V111.5H875.5" fill="none" stroke="#fff" stroke-width="1"/><text x="832.5" y="121" font-family="Liberation Sans" font-size="11" fill="#000" stroke="#000" stroke-width="0.2" textLength="43.5" lengthAdjust="spacingAndGlyphs">Навигатор</text><path d="M787.5 124.5V110.5H818L831 124.5Z" fill="#ECE9D8" stroke="#000" stroke-width="1"/><path d="M788.5 124V111.5H817.5" fill="none" stroke="#fff" stroke-width="1"/><text x="794.5" y="121" font-family="Liberation Sans" font-size="11" fill="#000" stroke="#000" stroke-width="0.2" textLength="17.3" lengthAdjust="spacingAndGlyphs">Вид</text><path d="M883.5 125V110.5H921L934 124.5V125Z" fill="#ECE9D8"/><path d="M883.5 125V110.5H921L934 124.5H989" fill="none" stroke="#000" stroke-width="1"/><path d="M884.5 125V111.5H920.5" fill="none" stroke="#fff" stroke-width="1"/><rect x="884" y="124" width="50" height="2" fill="#ECE9D8"/><path d="M884.5 126V111.5" stroke="#fff" stroke-width="1"/><path d="M887 117.2L890.2 113.5L893.4 117.2ZM887 118.2L890.2 121.8L893.4 118.2Z" fill="#000"/><text x="897.5" y="121" font-family="Liberation Sans" font-size="11" fill="#000" stroke="#000" stroke-width="0.2" textLength="15.8" lengthAdjust="spacingAndGlyphs">Info</text></svg>
<svg class="a" style="left:973.5px;top:108.5px" width="16" height="16"><circle cx="8" cy="8" r="6.8" fill="#ECE9D8" stroke="#000" stroke-width="1.1"/><path d="M6 4.5L10.5 8L6 11.5Z" fill="#000"/></svg>
<svg class="a" style="left:783px;top:126px" width="206" height="48" viewBox="783 126 206 48">
<path d="M794 139.5H803M798.5 135V144" stroke="#000" stroke-width="1"/>
<path d="M885.5 128V151M885.5 157V171" stroke="#8D8B80" stroke-width="1"/>
<path d="M886.5 128V151M886.5 157V171" stroke="#fff" stroke-width="1"/>
<path d="M787 153.5H985" stroke="#ACA899" stroke-width="1"/><path d="M787 154.5H985" stroke="#fff" stroke-width="1"/>
<path d="M810 166.5H819.5L815 159L812.5 163" fill="none" stroke="#000" stroke-width="0.9"/>
<path d="M814.5 160L818 158.5" stroke="#000" stroke-width="0.9"/>
</svg>
<svg class="a" style="left:811px;top:120px;overflow:visible" width="8" height="14"><text x="0" y="18" font-family="Liberation Sans" font-size="11"  fill="#000" stroke="#000" stroke-width="0.2" textLength="6" lengthAdjust="spacingAndGlyphs">X</text></svg>
<svg class="a" style="left:824.5px;top:120px;overflow:visible" width="54.8" height="14"><text x="0" y="18" font-family="Liberation Sans" font-size="11"  fill="#000" stroke="#000" stroke-width="0.2" textLength="52.8" lengthAdjust="spacingAndGlyphs">: 76,822 мм</text></svg>
<svg class="a" style="left:811px;top:132px;overflow:visible" width="8" height="14"><text x="0" y="18" font-family="Liberation Sans" font-size="11"  fill="#000" stroke="#000" stroke-width="0.2" textLength="6" lengthAdjust="spacingAndGlyphs">Y</text></svg>
<svg class="a" style="left:824.5px;top:132px;overflow:visible" width="61" height="14"><text x="0" y="18" font-family="Liberation Sans" font-size="11"  fill="#000" stroke="#000" stroke-width="0.2" textLength="59" lengthAdjust="spacingAndGlyphs">: 171,906 мм</text></svg>
<svg class="a" style="left:824.5px;top:149px;overflow:visible" width="54.3" height="14"><text x="0" y="18" font-family="Liberation Sans" font-size="11"  fill="#000" stroke="#000" stroke-width="0.2" textLength="52.3" lengthAdjust="spacingAndGlyphs">: -970,612°</text></svg>
<div class="a" style="left:780px;top:226px;width:212px;height:246px;background:#ECE9D8;border-left:1px solid #FBF9F0;border-top:1px solid #FBF9F0;border-right:1px solid #000;border-bottom:1px solid #000;box-shadow:inset -1px -1px 0 #B5B2A2"></div><div class="a" style="left:783px;top:229px;width:206px;height:12px;background:#0052E0"></div><div class="a" style="left:783px;top:241px;width:206px;height:1px;background:#000"></div>
<div class="a" style="left:964px;top:230px;width:11px;height:10px;background:#ECE9D8;border-left:1px solid #fff;border-top:1px solid #fff;border-right:1px solid #000;border-bottom:1px solid #000"></div><div class="a" style="left:966px;top:232px;width:6px;height:2px;background:#000"></div>
<div class="a" style="left:977px;top:230px;width:11px;height:10px;background:#ECE9D8;border-left:1px solid #fff;border-top:1px solid #fff;border-right:1px solid #000;border-bottom:1px solid #000"></div><svg class="a" style="left:979px;top:232px" width="7" height="6"><path d="M0.5 0.5L6.5 5.5M6.5 0.5L0.5 5.5" stroke="#000" stroke-width="1.6"/></svg>
<svg class="a" style="left:783px;top:242px" width="206" height="17" viewBox="783 242 206 17"><rect x="783" y="242" width="206" height="15" fill="#ABA795"/><path d="M783 257.5H989" stroke="#000" stroke-width="1"/><path d="M783 258.5H989" stroke="#FDFCF6" stroke-width="1"/><path d="M836.5 257.5V243.5H883L896 257.5Z" fill="#ECE9D8" stroke="#000" stroke-width="1"/><path d="M837.5 257V244.5H882.5" fill="none" stroke="#fff" stroke-width="1"/><text x="841" y="254" font-family="Liberation Sans" font-size="11" fill="#000" stroke="#000" stroke-width="0.2" textLength="43.2" lengthAdjust="spacingAndGlyphs">Атрибуты</text><path d="M787.5 258V243.5H826L839 257.5V258Z" fill="#ECE9D8"/><path d="M787.5 258V243.5H826L839 257.5H989" fill="none" stroke="#000" stroke-width="1"/><path d="M788.5 258V244.5H825.5" fill="none" stroke="#fff" stroke-width="1"/><rect x="788" y="257" width="51" height="2" fill="#ECE9D8"/><path d="M788.5 259V244.5" stroke="#fff" stroke-width="1"/><path d="M790 250.2L793.2 246.5L796.4 250.2ZM790 251.2L793.2 254.8L796.4 251.2Z" fill="#000"/><text x="801.5" y="254" font-family="Liberation Sans" font-size="11" fill="#000" stroke="#000" stroke-width="0.2" textLength="20" lengthAdjust="spacingAndGlyphs">Цвет</text></svg>
<svg class="a" style="left:973.5px;top:242px" width="16" height="16"><circle cx="8" cy="8" r="6.8" fill="#ECE9D8" stroke="#000" stroke-width="1.1"/><path d="M6 4.5L10.5 8L6 11.5Z" fill="#000"/></svg>
<svg class="a" style="left:783px;top:259px" width="206" height="96" viewBox="783 259 206 96">
<defs>
<linearGradient id="trig" x1="0" x2="0" y1="0" y2="1"><stop offset="0" stop-color="#7A786C"/><stop offset="1" stop-color="#F4F2EA"/></linearGradient>
<linearGradient id="cC" x1="0" x2="1"><stop offset="0" stop-color="#fff"/><stop offset="1" stop-color="#00A0D8"/></linearGradient>
<linearGradient id="cM" x1="0" x2="1"><stop offset="0" stop-color="#fff"/><stop offset="1" stop-color="#EC0A8C"/></linearGradient>
<linearGradient id="cY" x1="0" x2="1"><stop offset="0" stop-color="#fff"/><stop offset="1" stop-color="#FFF000"/></linearGradient>
<linearGradient id="cK" x1="0" x2="1"><stop offset="0" stop-color="#fff"/><stop offset="1" stop-color="#000"/></linearGradient>
<linearGradient id="spec" x1="0" x2="1">
<stop offset="0" stop-color="#E8181E"/><stop offset="0.17" stop-color="#F7EA1A"/><stop offset="0.36" stop-color="#1A9A3C"/><stop offset="0.52" stop-color="#18A8D8"/><stop offset="0.68" stop-color="#1A2A90"/><stop offset="0.84" stop-color="#E8188C"/><stop offset="1" stop-color="#E81828"/>
</linearGradient>
<linearGradient id="specv" x1="0" x2="0" y1="0" y2="1"><stop offset="0" stop-color="#fff" stop-opacity="0.85"/><stop offset="0.45" stop-color="#fff" stop-opacity="0"/><stop offset="0.55" stop-color="#000" stop-opacity="0"/><stop offset="1" stop-color="#000" stop-opacity="1"/></linearGradient>
</defs>
<rect x="797.5" y="273.5" width="19.5" height="19.5" fill="#000"/>
<rect x="802" y="278" width="10.5" height="10.5" fill="#ECE9D8" stroke="#fff" stroke-width="1"/>
<rect x="789.5" y="265.5" width="18.5" height="18.5" fill="#fff" stroke="#000" stroke-width="1"/>
<rect x="836.5" y="266.5" width="102" height="6" fill="url(#cC)" stroke="#000" stroke-width="1"/>
<path d="M836 273V274" stroke="#000"/>
<path d="M832.5 278.5L837.5 273.5L842.5 278.5Z" fill="url(#trig)" stroke="#000" stroke-width="1"/><rect x="836.5" y="284.5" width="102" height="6" fill="url(#cM)" stroke="#000" stroke-width="1"/>
<path d="M836 291V292" stroke="#000"/>
<path d="M832.5 296.5L837.5 291.5L842.5 296.5Z" fill="url(#trig)" stroke="#000" stroke-width="1"/><rect x="836.5" y="302.5" width="102" height="6" fill="url(#cY)" stroke="#000" stroke-width="1"/>
<path d="M836 309V310" stroke="#000"/>
<path d="M832.5 314.5L837.5 309.5L842.5 314.5Z" fill="url(#trig)" stroke="#000" stroke-width="1"/><rect x="836.5" y="320.5" width="102" height="6" fill="url(#cK)" stroke="#000" stroke-width="1"/>
<path d="M836 327V328" stroke="#000"/>
<path d="M832.5 332.5L837.5 327.5L842.5 332.5Z" fill="url(#trig)" stroke="#000" stroke-width="1"/>
<rect x="786" y="334" width="200" height="17" fill="#000"/>
<rect x="787" y="335" width="15" height="15" fill="#fff"/>
<path d="M787.5 349.5L801.5 335.5" stroke="#E0102A" stroke-width="1.6"/>
<rect x="803" y="335" width="167" height="15" fill="url(#spec)"/>
<rect x="803" y="335" width="167" height="15" fill="url(#specv)"/>
<rect x="970" y="335" width="15" height="7" fill="#fff"/>
</svg>
<svg class="a" style="left:827px;top:255px;overflow:visible" width="9" height="14"><text x="0" y="18" font-family="Liberation Sans" font-size="11"  fill="#000" stroke="#000" stroke-width="0.2" textLength="7" lengthAdjust="spacingAndGlyphs">C</text></svg>
<svg class="a" style="left:825.5px;top:273px;overflow:visible" width="10.5" height="14"><text x="0" y="18" font-family="Liberation Sans" font-size="11"  fill="#000" stroke="#000" stroke-width="0.2" textLength="8.5" lengthAdjust="spacingAndGlyphs">M</text></svg>
<svg class="a" style="left:827px;top:291px;overflow:visible" width="9" height="14"><text x="0" y="18" font-family="Liberation Sans" font-size="11"  fill="#000" stroke="#000" stroke-width="0.2" textLength="7" lengthAdjust="spacingAndGlyphs">Y</text></svg>
<svg class="a" style="left:827px;top:309px;overflow:visible" width="9" height="14"><text x="0" y="18" font-family="Liberation Sans" font-size="11"  fill="#000" stroke="#000" stroke-width="0.2" textLength="7" lengthAdjust="spacingAndGlyphs">K</text></svg>
<div class="a" style="left:945px;top:261px;width:32px;height:16px;background:#fff;border-top:1px solid #ACA899;border-left:1px solid #ACA899;border-right:1px solid #fff;border-bottom:1px solid #fff;box-shadow:inset 1px 1px 0 #716F64, inset -1px -1px 0 #F1EFE2"></div><div class="a" style="left:948px;top:263px;line-height:13px;font-size:11px;white-space:nowrap;transform:scaleX(0.91);transform-origin:0 0;-webkit-text-stroke:0.2px #000">0</div>
<svg class="a" style="left:980.5px;top:256px;overflow:visible" width="9" height="14"><text x="0" y="18" font-family="Liberation Sans" font-size="11"  fill="#000" stroke="#000" stroke-width="0.2" textLength="7" lengthAdjust="spacingAndGlyphs">%</text></svg>
<div class="a" style="left:945px;top:279px;width:32px;height:16px;background:#fff;border-top:1px solid #ACA899;border-left:1px solid #ACA899;border-right:1px solid #fff;border-bottom:1px solid #fff;box-shadow:inset 1px 1px 0 #716F64, inset -1px -1px 0 #F1EFE2"></div><div class="a" style="left:948px;top:281px;line-height:13px;font-size:11px;white-space:nowrap;transform:scaleX(0.91);transform-origin:0 0;-webkit-text-stroke:0.2px #000">0</div>
<svg class="a" style="left:980.5px;top:274px;overflow:visible" width="9" height="14"><text x="0" y="18" font-family="Liberation Sans" font-size="11"  fill="#000" stroke="#000" stroke-width="0.2" textLength="7" lengthAdjust="spacingAndGlyphs">%</text></svg>
<div class="a" style="left:945px;top:297px;width:32px;height:16px;background:#fff;border-top:1px solid #ACA899;border-left:1px solid #ACA899;border-right:1px solid #fff;border-bottom:1px solid #fff;box-shadow:inset 1px 1px 0 #716F64, inset -1px -1px 0 #F1EFE2"></div><div class="a" style="left:948px;top:299px;line-height:13px;font-size:11px;white-space:nowrap;transform:scaleX(0.91);transform-origin:0 0;-webkit-text-stroke:0.2px #000">0</div>
<svg class="a" style="left:980.5px;top:292px;overflow:visible" width="9" height="14"><text x="0" y="18" font-family="Liberation Sans" font-size="11"  fill="#000" stroke="#000" stroke-width="0.2" textLength="7" lengthAdjust="spacingAndGlyphs">%</text></svg>
<div class="a" style="left:945px;top:315px;width:32px;height:16px;background:#fff;border-top:1px solid #ACA899;border-left:1px solid #ACA899;border-right:1px solid #fff;border-bottom:1px solid #fff;box-shadow:inset 1px 1px 0 #716F64, inset -1px -1px 0 #F1EFE2"></div><div class="a" style="left:948px;top:317px;line-height:13px;font-size:11px;white-space:nowrap;transform:scaleX(0.91);transform-origin:0 0;-webkit-text-stroke:0.2px #000">0</div>
<svg class="a" style="left:980.5px;top:310px;overflow:visible" width="9" height="14"><text x="0" y="18" font-family="Liberation Sans" font-size="11"  fill="#000" stroke="#000" stroke-width="0.2" textLength="7" lengthAdjust="spacingAndGlyphs">%</text></svg>
<div class="a" style="left:780px;top:356px;width:211px;height:1px;background:#000"></div>
<svg class="a" style="left:783px;top:357px" width="206" height="17" viewBox="783 357 206 17"><rect x="783" y="357" width="206" height="15" fill="#ABA795"/><path d="M783 372.5H989" stroke="#000" stroke-width="1"/><path d="M783 373.5H989" stroke="#FDFCF6" stroke-width="1"/><path d="M915.5 372.5V358.5H960L973 372.5Z" fill="#ECE9D8" stroke="#000" stroke-width="1"/><path d="M916.5 372V359.5H959.5" fill="none" stroke="#fff" stroke-width="1"/><text x="921.2" y="369" font-family="Liberation Sans" font-size="11" fill="#000" stroke="#000" stroke-width="0.2" textLength="40.7" lengthAdjust="spacingAndGlyphs">Градиент</text><path d="M787.5 372.5V358.5H853L866 372.5Z" fill="#ECE9D8" stroke="#000" stroke-width="1"/><path d="M788.5 372V359.5H852.5" fill="none" stroke="#fff" stroke-width="1"/><text x="794.8" y="369" font-family="Liberation Sans" font-size="11" fill="#000" stroke="#000" stroke-width="0.2" textLength="59" lengthAdjust="spacingAndGlyphs">Прозрачность</text><path d="M861.5 373V358.5H907L920 372.5V373Z" fill="#ECE9D8"/><path d="M861.5 373V358.5H907L920 372.5H989" fill="none" stroke="#000" stroke-width="1"/><path d="M862.5 373V359.5H906.5" fill="none" stroke="#fff" stroke-width="1"/><rect x="862" y="372" width="58" height="2" fill="#ECE9D8"/><path d="M862.5 374V359.5" stroke="#fff" stroke-width="1"/><path d="M864.5 365.2L867.7 361.5L870.9 365.2ZM864.5 366.2L867.7 369.8L870.9 366.2Z" fill="#000"/><text x="875.8" y="369" font-family="Liberation Sans" font-size="11" fill="#000" stroke="#000" stroke-width="0.2" textLength="26.6" lengthAdjust="spacingAndGlyphs">Штрих</text></svg>
<svg class="a" style="left:973.5px;top:357px" width="16" height="16"><circle cx="8" cy="8" r="6.8" fill="#ECE9D8" stroke="#000" stroke-width="1.1"/><path d="M6 4.5L10.5 8L6 11.5Z" fill="#000"/></svg>
<svg class="a" style="left:803.7px;top:373px;overflow:visible" width="36.3" height="14"><text x="0" y="18" font-family="Liberation Sans" font-size="11"  fill="#000" stroke="#000" stroke-width="0.2" textLength="34.3" lengthAdjust="spacingAndGlyphs">Ширина:</text></svg>
<div class="a" style="left:840px;top:378px;width:63px;height:19px;background:#fff;border-top:1px solid #ACA899;border-left:1px solid #ACA899;border-right:1px solid #fff;border-bottom:1px solid #fff;box-shadow:inset 1px 1px 0 #716F64, inset -1px -1px 0 #F1EFE2"></div><div class="a" style="left:858px;top:381px;line-height:13px;font-size:11px;white-space:nowrap;transform:scaleX(0.91);transform-origin:0 0;-webkit-text-stroke:0.2px #000">1 т</div>
<svg class="a" style="left:841px;top:379px" width="15" height="17" viewBox="0 0 15 17"><rect x="0" y="0" width="15" height="17" fill="#000"/><rect x="1" y="1" width="13" height="7" fill="#ECE9D8"/><rect x="1" y="9" width="13" height="7" fill="#ECE9D8"/><path d="M1.5 8V1.5H13M1.5 16V9.5H13" stroke="#fff" stroke-width="1" fill="none"/><path d="M13.5 1V7.5H1M13.5 9V15.5H1" stroke="#ACA899" stroke-width="1" fill="none"/><path d="M4.5 6L7.5 3L10.5 6Z M4.5 11L7.5 14L10.5 11Z" fill="#000"/></svg>
<div class="a" style="left:884px;top:380px;width:18px;height:16px;background:#ECE9D8;border-left:1px solid #fff;border-top:1px solid #fff;border-right:1px solid #5D5B52;border-bottom:1px solid #5D5B52;box-shadow:inset -1px -1px 0 #ACA899"></div>
<svg class="a" style="left:891px;top:386px" width="5" height="3"><path d="M0 0L2.5 3L5 0Z" fill="#000"/></svg>
<svg class="a" style="left:911.5px;top:373px;overflow:visible" width="21.5" height="14"><text x="0" y="18" font-family="Liberation Sans" font-size="11"  fill="#000" stroke="#000" stroke-width="0.2" textLength="19.5" lengthAdjust="spacingAndGlyphs">акр.:</text></svg>
<svg class="a" style="left:802.7px;top:395px;overflow:visible" width="37.3" height="14"><text x="0" y="18" font-family="Liberation Sans" font-size="11"  fill="#000" stroke="#000" stroke-width="0.2" textLength="35.3" lengthAdjust="spacingAndGlyphs">Предел:</text></svg>
<div class="a" style="left:840px;top:400px;width:48px;height:19px;background:#fff;border-top:1px solid #ACA899;border-left:1px solid #ACA899;border-right:1px solid #fff;border-bottom:1px solid #fff;box-shadow:inset 1px 1px 0 #716F64, inset -1px -1px 0 #F1EFE2"></div><div class="a" style="left:858px;top:403px;line-height:13px;font-size:11px;white-space:nowrap;transform:scaleX(0.91);transform-origin:0 0;-webkit-text-stroke:0.2px #000">4</div>
<svg class="a" style="left:841px;top:401px" width="15" height="17" viewBox="0 0 15 17"><rect x="0" y="0" width="15" height="17" fill="#000"/><rect x="1" y="1" width="13" height="7" fill="#ECE9D8"/><rect x="1" y="9" width="13" height="7" fill="#ECE9D8"/><path d="M1.5 8V1.5H13M1.5 16V9.5H13" stroke="#fff" stroke-width="1" fill="none"/><path d="M13.5 1V7.5H1M13.5 9V15.5H1" stroke="#ACA899" stroke-width="1" fill="none"/><path d="M4.5 6L7.5 3L10.5 6Z M4.5 11L7.5 14L10.5 11Z" fill="#000"/></svg>
<svg class="a" style="left:890px;top:395.5px;overflow:visible" width="7" height="14"><text x="0" y="18" font-family="Liberation Sans" font-size="11"  fill="#000" stroke="#000" stroke-width="0.2" textLength="5" lengthAdjust="spacingAndGlyphs">х</text></svg>
<svg class="a" style="left:904px;top:395px;overflow:visible" width="29" height="14"><text x="0" y="18" font-family="Liberation Sans" font-size="11"  fill="#000" stroke="#000" stroke-width="0.2" textLength="27" lengthAdjust="spacingAndGlyphs">Соед.:</text></svg>
<svg class="a" style="left:934px;top:379px" width="52" height="18" viewBox="0 0 52 18"><defs><linearGradient id="cg" x1="0" x2="1" y1="0" y2="1"><stop offset="0" stop-color="#F2F0E6"/><stop offset="1" stop-color="#A8A494"/></linearGradient></defs><rect x="0" y="0" width="52" height="18" fill="#000"/><rect x="1" y="1" width="16" height="16" fill="#fff"/><rect x="9" y="4" width="6" height="11" fill="url(#cg)"/><rect x="7" y="7" width="3" height="3" fill="#000"/><path d="M9 8.5H15M9 14.5H15" stroke="#000" stroke-width="1"/><rect x="18" y="1" width="16" height="16" fill="#E6E3D3"/><path d="M18.5 17V1.5H34" stroke="#fff" stroke-width="1" fill="none"/><path d="M33.5 1V16.5H18" stroke="#ACA899" stroke-width="1" fill="none"/><path d="M32 4H26C21 4 21 15 26 15H32Z" fill="url(#cg)"/><rect x="24" y="7" width="3" height="3" fill="#000"/><path d="M26 8.5H32M26 14.5H32" stroke="#000" stroke-width="1"/><rect x="35" y="1" width="16" height="16" fill="#E6E3D3"/><path d="M35.5 17V1.5H51" stroke="#fff" stroke-width="1" fill="none"/><path d="M50.5 1V16.5H35" stroke="#ACA899" stroke-width="1" fill="none"/><rect x="38" y="4" width="11" height="11" fill="url(#cg)"/><rect x="41" y="7" width="3" height="3" fill="#000"/><path d="M43 8.5H49M43 14.5H49" stroke="#000" stroke-width="1"/></svg>
<svg class="a" style="left:934px;top:401px" width="52" height="18" viewBox="0 0 52 18"><defs><linearGradient id="cg" x1="0" x2="1" y1="0" y2="1"><stop offset="0" stop-color="#F2F0E6"/><stop offset="1" stop-color="#A8A494"/></linearGradient></defs><rect x="0" y="0" width="52" height="18" fill="#000"/><rect x="1" y="1" width="16" height="16" fill="#fff"/><path d="M4 16V4H15V16Z" fill="url(#cg)"/><rect x="7" y="7" width="3" height="3" fill="#000"/><path d="M9 8.5H15M8.5 9V16M12.5 16V12.5H15" stroke="#000" stroke-width="1" fill="none"/><rect x="18" y="1" width="16" height="16" fill="#E6E3D3"/><path d="M18.5 17V1.5H34" stroke="#fff" stroke-width="1" fill="none"/><path d="M33.5 1V16.5H18" stroke="#ACA899" stroke-width="1" fill="none"/><path d="M21 16V9C21 5 24 4 27 4H32V16Z" fill="url(#cg)"/><rect x="24" y="7" width="3" height="3" fill="#000"/><path d="M26 8.5H32M25.5 9V16M29.5 16V12.5H32" stroke="#000" stroke-width="1" fill="none"/><rect x="35" y="1" width="16" height="16" fill="#E6E3D3"/><path d="M35.5 17V1.5H51" stroke="#fff" stroke-width="1" fill="none"/><path d="M50.5 1V16.5H35" stroke="#ACA899" stroke-width="1" fill="none"/><path d="M38 16V9L43 4H49V16Z" fill="url(#cg)"/><rect x="41" y="7" width="3" height="3" fill="#000"/><path d="M43 8.5H49M42.5 9V16M46.5 16V12.5H49" stroke="#000" stroke-width="1" fill="none"/></svg>
<div class="a" style="left:786px;top:421px;width:15px;height:15px;background:#fff;border-top:1px solid #ACA899;border-left:1px solid #ACA899;border-right:1px solid #fff;border-bottom:1px solid #fff;box-shadow:inset 1px 1px 0 #716F64, inset -1px -1px 0 #F1EFE2"></div>
<svg class="a" style="left:807.5px;top:415px;overflow:visible" width="36.8" height="14"><text x="0" y="18" font-family="Liberation Sans" font-size="11"  fill="#000" stroke="#000" stroke-width="0.2" textLength="34.8" lengthAdjust="spacingAndGlyphs">Пунктир</text></svg>
<div class="a" style="left:859px;top:428px;width:128px;height:1px;background:#ACA899"></div><div class="a" style="left:859px;top:429px;width:128px;height:1px;background:#fff"></div>
<div class="a" style="left:786px;top:437px;width:30px;height:18px;background:#ECE9D8;border-top:1px solid #ACA899;border-left:1px solid #ACA899;border-right:1px solid #fff;border-bottom:1px solid #fff;box-shadow:inset 1px 1px 0 #716F64, inset -1px -1px 0 #F1EFE2"></div>
<div class="a" style="left:820px;top:437px;width:30px;height:18px;background:#ECE9D8;border-top:1px solid #ACA899;border-left:1px solid #ACA899;border-right:1px solid #fff;border-bottom:1px solid #fff;box-shadow:inset 1px 1px 0 #716F64, inset -1px -1px 0 #F1EFE2"></div>
<div class="a" style="left:854px;top:437px;width:30px;height:18px;background:#ECE9D8;border-top:1px solid #ACA899;border-left:1px solid #ACA899;border-right:1px solid #fff;border-bottom:1px solid #fff;box-shadow:inset 1px 1px 0 #716F64, inset -1px -1px 0 #F1EFE2"></div>
<div class="a" style="left:888px;top:437px;width:30px;height:18px;background:#ECE9D8;border-top:1px solid #ACA899;border-left:1px solid #ACA899;border-right:1px solid #fff;border-bottom:1px solid #fff;box-shadow:inset 1px 1px 0 #716F64, inset -1px -1px 0 #F1EFE2"></div>
<div class="a" style="left:921px;top:437px;width:30px;height:18px;background:#ECE9D8;border-top:1px solid #ACA899;border-left:1px solid #ACA899;border-right:1px solid #fff;border-bottom:1px solid #fff;box-shadow:inset 1px 1px 0 #716F64, inset -1px -1px 0 #F1EFE2"></div>
<div class="a" style="left:956px;top:437px;width:30px;height:18px;background:#ECE9D8;border-top:1px solid #ACA899;border-left:1px solid #ACA899;border-right:1px solid #fff;border-bottom:1px solid #fff;box-shadow:inset 1px 1px 0 #716F64, inset -1px -1px 0 #F1EFE2"></div>
<div class="a" style="left:789px;top:454px;width:29px;height:14px;overflow:hidden"><div class="a" style="left:-2px;top:2px;font-size:11px;line-height:13px;color:#ACA899;white-space:nowrap;transform:scaleX(0.84);transform-origin:0 0">пункти</div></div>
<div class="a" style="left:826px;top:454px;width:25px;height:14px;overflow:hidden"><div class="a" style="left:-2px;top:2px;font-size:11px;line-height:13px;color:#ACA899;white-space:nowrap;transform:scaleX(0.84);transform-origin:0 0">пробел</div></div>
<div class="a" style="left:854px;top:454px;width:32px;height:14px;overflow:hidden"><div class="a" style="left:-2px;top:2px;font-size:11px;line-height:13px;color:#ACA899;white-space:nowrap;transform:scaleX(0.84);transform-origin:0 0">пункти</div></div>
<div class="a" style="left:895px;top:454px;width:24px;height:14px;overflow:hidden"><div class="a" style="left:-2px;top:2px;font-size:11px;line-height:13px;color:#ACA899;white-space:nowrap;transform:scaleX(0.84);transform-origin:0 0">пробел</div></div>
<div class="a" style="left:923px;top:454px;width:32px;height:14px;overflow:hidden"><div class="a" style="left:-2px;top:2px;font-size:11px;line-height:13px;color:#ACA899;white-space:nowrap;transform:scaleX(0.84);transform-origin:0 0">пункти</div></div>
<div class="a" style="left:963px;top:454px;width:26px;height:14px;overflow:hidden"><div class="a" style="left:-2px;top:2px;font-size:11px;line-height:13px;color:#ACA899;white-space:nowrap;transform:scaleX(0.84);transform-origin:0 0">пробел</div></div>
<div class="a" style="left:781px;top:569px;width:211px;height:130px;background:#ECE9D8;border-left:1px solid #FBF9F0;border-top:1px solid #FBF9F0;border-right:1px solid #000;border-bottom:1px solid #000;box-shadow:inset -1px -1px 0 #B5B2A2"></div><div class="a" style="left:783px;top:571px;width:206px;height:12px;background:#0052E0"></div><div class="a" style="left:783px;top:583px;width:206px;height:1px;background:#000"></div>
<div class="a" style="left:964px;top:572px;width:11px;height:10px;background:#ECE9D8;border-left:1px solid #fff;border-top:1px solid #fff;border-right:1px solid #000;border-bottom:1px solid #000"></div><div class="a" style="left:966px;top:574px;width:6px;height:2px;background:#000"></div>
<div class="a" style="left:977px;top:572px;width:11px;height:10px;background:#ECE9D8;border-left:1px solid #fff;border-top:1px solid #fff;border-right:1px solid #000;border-bottom:1px solid #000"></div><svg class="a" style="left:979px;top:574px" width="7" height="6"><path d="M0.5 0.5L6.5 5.5M6.5 0.5L0.5 5.5" stroke="#000" stroke-width="1.6"/></svg>
<svg class="a" style="left:783px;top:584px" width="206" height="17" viewBox="783 584 206 17"><rect x="783" y="584" width="206" height="15" fill="#ABA795"/><path d="M783 599.5H989" stroke="#000" stroke-width="1"/><path d="M783 600.5H989" stroke="#FDFCF6" stroke-width="1"/><path d="M883.5 599.5V585.5H924.5L937.5 599.5Z" fill="#ECE9D8" stroke="#000" stroke-width="1"/><path d="M884.5 599V586.5H924.0" fill="none" stroke="#fff" stroke-width="1"/><text x="891.7" y="596" font-family="Liberation Sans" font-size="11" fill="#000" stroke="#000" stroke-width="0.2" textLength="34" lengthAdjust="spacingAndGlyphs">Ссылки</text><path d="M828.5 599.5V585.5H878L891 599.5Z" fill="#ECE9D8" stroke="#000" stroke-width="1"/><path d="M829.5 599V586.5H877.5" fill="none" stroke="#fff" stroke-width="1"/><text x="836" y="596" font-family="Liberation Sans" font-size="11" fill="#000" stroke="#000" stroke-width="0.2" textLength="41" lengthAdjust="spacingAndGlyphs">Действия</text><path d="M787.5 600V585.5H820L833 599.5V600Z" fill="#ECE9D8"/><path d="M787.5 600V585.5H820L833 599.5H989" fill="none" stroke="#000" stroke-width="1"/><path d="M788.5 600V586.5H819.5" fill="none" stroke="#fff" stroke-width="1"/><rect x="788" y="599" width="45" height="2" fill="#ECE9D8"/><path d="M788.5 601V586.5" stroke="#fff" stroke-width="1"/><text x="794.5" y="596" font-family="Liberation Sans" font-size="11" fill="#000" stroke="#000" stroke-width="0.2" textLength="22.1" lengthAdjust="spacingAndGlyphs">Слои</text></svg>
<svg class="a" style="left:973.5px;top:583.5px" width="16" height="16"><circle cx="8" cy="8" r="6.8" fill="#ECE9D8" stroke="#000" stroke-width="1.1"/><path d="M6 4.5L10.5 8L6 11.5Z" fill="#000"/></svg>
<svg class="a" style="left:782px;top:600px" width="209" height="98" viewBox="782 600 209 98">
<rect x="973" y="601" width="16" height="79" fill="url(#chk)"/>
<!-- row -->
<rect x="783" y="601" width="190" height="1" fill="#000"/>
<rect x="783" y="602" width="190" height="19" fill="#ECE9D8"/>
<path d="M783 602.5H826M783.5 602V621" stroke="#fff" stroke-width="1"/>
<rect x="783" y="621" width="190" height="1" fill="#000"/>
<rect x="826" y="601" width="1" height="21" fill="#000"/>
<path d="M827 602.5H842M827.5 602V621" stroke="#fff" stroke-width="1"/>
<!-- eye cell -->
<rect x="787" y="605" width="13" height="14" fill="#E4E1D2"/>
<path d="M787.5 619V605.5H800" stroke="#ACA899" stroke-width="1" fill="none"/>
<path d="M799.5 605V618.5H787" stroke="#fff" stroke-width="1" fill="none"/>
<path d="M788.5 611.5C790.5 608 796.5 608 798.5 611.5C796.5 615 790.5 615 788.5 611.5Z" fill="#fff" stroke="#000" stroke-width="1"/>
<circle cx="793" cy="611.5" r="2.4" fill="#000"/>
<path d="M789 608.5C791.5 606.5 796 606.5 798 608.5M789.5 615C792 616.5 795.5 616.5 798 615" stroke="#000" stroke-width="1" fill="none"/>
<!-- lock cell -->
<path d="M809.5 619V605.5H822" stroke="#ACA899" stroke-width="1" fill="none"/>
<path d="M821.5 605V618.5H809" stroke="#fff" stroke-width="1" fill="none"/>
<!-- arrow -->
<path d="M831.5 607.5L837.5 612.5L831.5 617.5Z" fill="#9A988C" stroke="#000" stroke-width="1.4"/>
<!-- highlight -->
<path d="M842 602H968L973 607V621H842Z" fill="#3A6BC4"/>
<rect x="847.5" y="604.5" width="15" height="15" fill="#ECE9D8" stroke="#000" stroke-width="1"/>
<ellipse cx="855" cy="612" rx="6" ry="5.8" fill="#fff" stroke="#8A8A8A" stroke-width="0.6"/>
<circle cx="954.5" cy="611.5" r="4" fill="none" stroke="#fff" stroke-width="1.2"/>
<rect x="964.5" y="607.5" width="7.5" height="8" fill="#5A8CF8" stroke="#fff" stroke-width="1"/>
<!-- scroll buttons -->
<rect x="973" y="602.5" width="16" height="17" fill="#ECE9D8"/>
<path d="M973.5 619.5V602.5H988.5" stroke="#fff" stroke-width="1" fill="none"/>
<path d="M988.5 602.5V619.5H973.5" stroke="#ACA899" stroke-width="1" fill="none"/>
<path d="M976.5 614L981 609.5L985.5 614Z" fill="#ACA899"/>
<rect x="973" y="662.5" width="16" height="17" fill="#ECE9D8"/>
<path d="M973.5 679.5V662.5H988.5" stroke="#fff" stroke-width="1" fill="none"/>
<path d="M988.5 662.5V679.5H973.5" stroke="#ACA899" stroke-width="1" fill="none"/>
<path d="M976.5 668L981 672.5L985.5 668Z" fill="#ACA899"/>
<!-- bottom bar -->
<path d="M783 680.5H973" stroke="#000" stroke-width="1"/>
<path d="M849.5 680.5V695.5H973.5V680.5M880.5 680.5V695.5M910.5 680.5V695.5M942.5 680.5V695.5" stroke="#000" stroke-width="1" fill="none"/>
<path d="M850.5 694.5V681.5H972.5M881.5 694.5V681.5M911.5 694.5V681.5M943.5 694.5V681.5" stroke="#fff" stroke-width="1" fill="none"/>
<!-- btn icons -->
<rect x="858.5" y="682.5" width="6" height="6" fill="none" stroke="#555" stroke-width="0.8" stroke-dasharray="1 1"/>
<circle cx="866" cy="689" r="4" fill="#fff" stroke="#000" stroke-width="1"/><path d="M866 689V685A4 4 0 0 1 870 689Z" fill="#000"/>
<path d="M887 685V688H892" stroke="#000" stroke-width="1" fill="none"/><path d="M891 686L893 688L891 690Z" fill="#000"/>
<rect x="894.5" y="685.5" width="7" height="7" fill="#fff" stroke="#000" stroke-width="1"/><rect x="897" y="688" width="5" height="5" fill="#000"/>
<rect x="921.5" y="684.5" width="7" height="8" fill="#fff" stroke="#000" stroke-width="1"/><rect x="924" y="687.5" width="5" height="5" fill="#000"/><rect x="925" y="688.5" width="3" height="3" fill="#fff"/>
<path d="M953 685H962M955 686V692.5H960V686" stroke="#A9A595" stroke-width="1.1" fill="none"/><path d="M956 684.5H959" stroke="#A9A595" stroke-width="1"/>
<!-- size grip -->
<path d="M988 684L977 695M988 688L981 695M988 692L985 695" stroke="#A9A595" stroke-width="1.1"/>
<path d="M988 685L978 695M988 689L982 695" stroke="#fff" stroke-width="0.6"/>
</svg>
<svg class="a" style="left:867.7px;top:598px;overflow:visible" width="36.3" height="14"><text x="0" y="18" font-family="Liberation Sans" font-size="11" font-weight="bold" fill="#fff" stroke="#fff" stroke-width="0.2" textLength="34.3" lengthAdjust="spacingAndGlyphs">Слой 1</text></svg>
<svg class="a" style="left:793.4px;top:675px;overflow:visible" width="30.9" height="14"><text x="0" y="18" font-family="Liberation Sans" font-size="11"  fill="#000" stroke="#000" stroke-width="0.2" textLength="28.9" lengthAdjust="spacingAndGlyphs">1 слой</text></svg>
</div></body></html>
